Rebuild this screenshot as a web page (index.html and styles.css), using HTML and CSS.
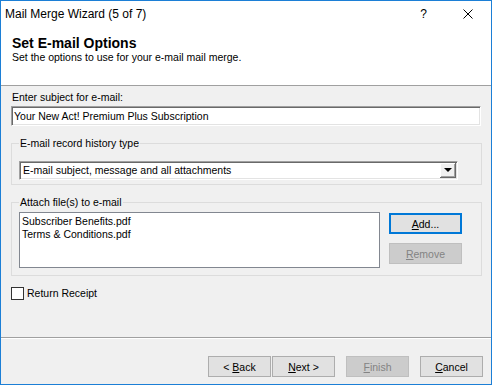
FILE: index.html
```html
<!DOCTYPE html>
<html lang="en">
<head>
    <meta charset="UTF-8">
    <title>Mail Merge Wizard (5 of 7)</title>
    <link rel="stylesheet" href="styles.css">
</head>
<body>
    <div class="window">
        <div class="top">
            <div class="titlebar">
                <span class="title">Mail Merge Wizard (5 of 7)</span>
                <span class="help">?</span>
                <svg class="close" width="10" height="10" viewBox="0 0 10 10">
                    <path d="M0.5 0.5 L9.5 9.5 M9.5 0.5 L0.5 9.5" stroke="#000" stroke-width="1" fill="none"/>
                </svg>
            </div>
            <div class="header">
                <h1>Set E-mail Options</h1>
                <p>Set the options to use for your e-mail mail merge.</p>
            </div>
        </div>

        <div class="body">
            <label class="field-label" for="subject">Enter subject for e-mail:</label>
            <input class="textbox" id="subject" type="text" value="Your New Act! Premium Plus Subscription">

            <fieldset class="group group-history">
                <legend>E-mail record history type</legend>
                <div class="combo">
                    <span class="combo-text">E-mail subject, message and all attachments</span>
                    <span class="combo-btn"><span class="arrow"></span></span>
                </div>
            </fieldset>

            <fieldset class="group group-attach">
                <legend>Attach file(s) to e-mail</legend>
                <div class="attach-row">
                    <div class="listbox">
                        <div>Subscriber Benefits.pdf</div>
                        <div>Terms &amp; Conditions.pdf</div>
                    </div>
                    <div class="side-buttons">
                        <button class="btn btn-default"><u>A</u>dd...</button>
                        <button class="btn" disabled><u>R</u>emove</button>
                    </div>
                </div>
            </fieldset>

            <label class="check">
                <span class="box"></span>
                Return Receipt
            </label>
        </div>

        <div class="footer">
            <button class="btn">&lt; <u>B</u>ack</button>
            <button class="btn"><u>N</u>ext &gt;</button>
            <button class="btn btn-finish" disabled><u>F</u>inish</button>
            <button class="btn btn-cancel"><u>C</u>ancel</button>
        </div>
    </div>
</body>
</html>
```

FILE: styles.css
```css
html, body {
    margin: 0;
    padding: 0;
}
body {
    font-family: "Liberation Sans", Arial, sans-serif;
    font-size: 10.5px;
    color: #000;
    background: #f0f0f0;
}
.window {
    box-sizing: border-box;
    width: 492px;
    height: 385px;
    border: 1px solid #1c7fd6;
    background: #f0f0f0;
    display: flex;
    flex-direction: column;
}
.top {
    background: #fff;
    height: 84px;
    border-bottom: 1px solid #a0a0a0;
}
.titlebar {
    height: 29px;
    display: flex;
    align-items: center;
    padding-left: 4px;
}
.title {
    font-size: 12px;
    flex: 1;
    margin-top: -4px;
}
.help {
    font-size: 12px;
    margin-right: 36px;
    margin-top: -4px;
}
.close {
    margin-right: 18px;
    margin-top: -4px;
}
.header {
    padding-left: 11px;
}
.header h1 {
    margin: 5px 0 0;
    font-size: 14px;
    line-height: 16px;
    font-weight: bold;
}
.header p {
    margin: 0;
    line-height: 13px;
}
.body {
    flex: 1;
    padding: 5px 10px 0;
    border-bottom: 1px solid #a0a0a0;
    box-shadow: 0 1px 0 #fff;
}
.field-label {
    display: block;
    line-height: 13px;
    margin-left: 1px;
}
.textbox {
    display: block;
    box-sizing: border-box;
    width: 470px;
    height: 20px;
    margin: 2px 0 0;
    padding: 0 0 0 2px;
    font: inherit;
    border: 1px solid;
    border-color: #a0a0a0 #fff #fff #a0a0a0;
    box-shadow: inset 1px 1px 0 #696969, inset -1px -1px 0 #e3e3e3;
    background: #fff;
}
.group {
    margin: 11px 0 0;
    width: 471px;
    box-sizing: border-box;
    border: 1px solid #dcdcdc;
    padding: 0 7px;
}
.group legend {
    padding: 0 1px;
    margin-left: 0;
    line-height: 13px;
}
.group-history {
    padding-top: 11px;
    padding-bottom: 4px;
}
.combo {
    box-sizing: border-box;
    width: 439px;
    height: 19px;
    display: flex;
    background: #fff;
    border: 1px solid;
    border-color: #a0a0a0 #fff #fff #a0a0a0;
    box-shadow: inset 1px 1px 0 #696969, inset -1px -1px 0 #e3e3e3;
}
.combo-text {
    flex: 1;
    padding: 2px 0 0 3px;
}
.combo-btn {
    width: 15px;
    margin: 1px 1px 1px 0;
    background: #f0f0f0;
    border-right: 1px solid #696969;
    border-bottom: 1px solid #696969;
    box-shadow: inset 1px 1px 0 #fff, inset -1px -1px 0 #a0a0a0;
    display: flex;
    align-items: center;
    justify-content: center;
}
.arrow {
    width: 0;
    height: 0;
    border-left: 4px solid transparent;
    border-right: 4px solid transparent;
    border-top: 4px solid #000;
}
.group-attach {
    padding-top: 3px;
    padding-bottom: 7px;
}
.attach-row {
    display: flex;
    gap: 9px;
}
.listbox {
    box-sizing: border-box;
    width: 361px;
    height: 56px;
    background: #fff;
    border: 1px solid #828790;
    padding: 2px 2px;
    line-height: 13px;
}
.side-buttons {
    display: flex;
    flex-direction: column;
    gap: 9px;
    padding-top: 1px;
}
.btn {
    box-sizing: border-box;
    width: 73px;
    height: 21px;
    padding: 0;
    font: inherit;
    color: #000;
    background: #e1e1e1;
    border: 1px solid #adadad;
}
.btn-default {
    border: 2px solid #0078d7;
}
.btn:disabled {
    background: #cccccc;
    border-color: #bfbfbf;
    color: #838383;
}
.check {
    display: flex;
    align-items: center;
    gap: 3px;
    margin-top: 11px;
    line-height: 13px;
}
.box {
    box-sizing: border-box;
    width: 13px;
    height: 13px;
    border: 1px solid #333;
    background: #fff;
}
.footer {
    height: 46px;
    display: flex;
    align-items: flex-start;
    padding: 18px 8px 0 0;
    box-sizing: border-box;
    justify-content: flex-end;
    gap: 1px;
}
.footer .btn {
    width: 63px;
}
.btn-finish {
    margin-left: 10px;
}
.btn-cancel {
    margin-left: 10px;
}
```
